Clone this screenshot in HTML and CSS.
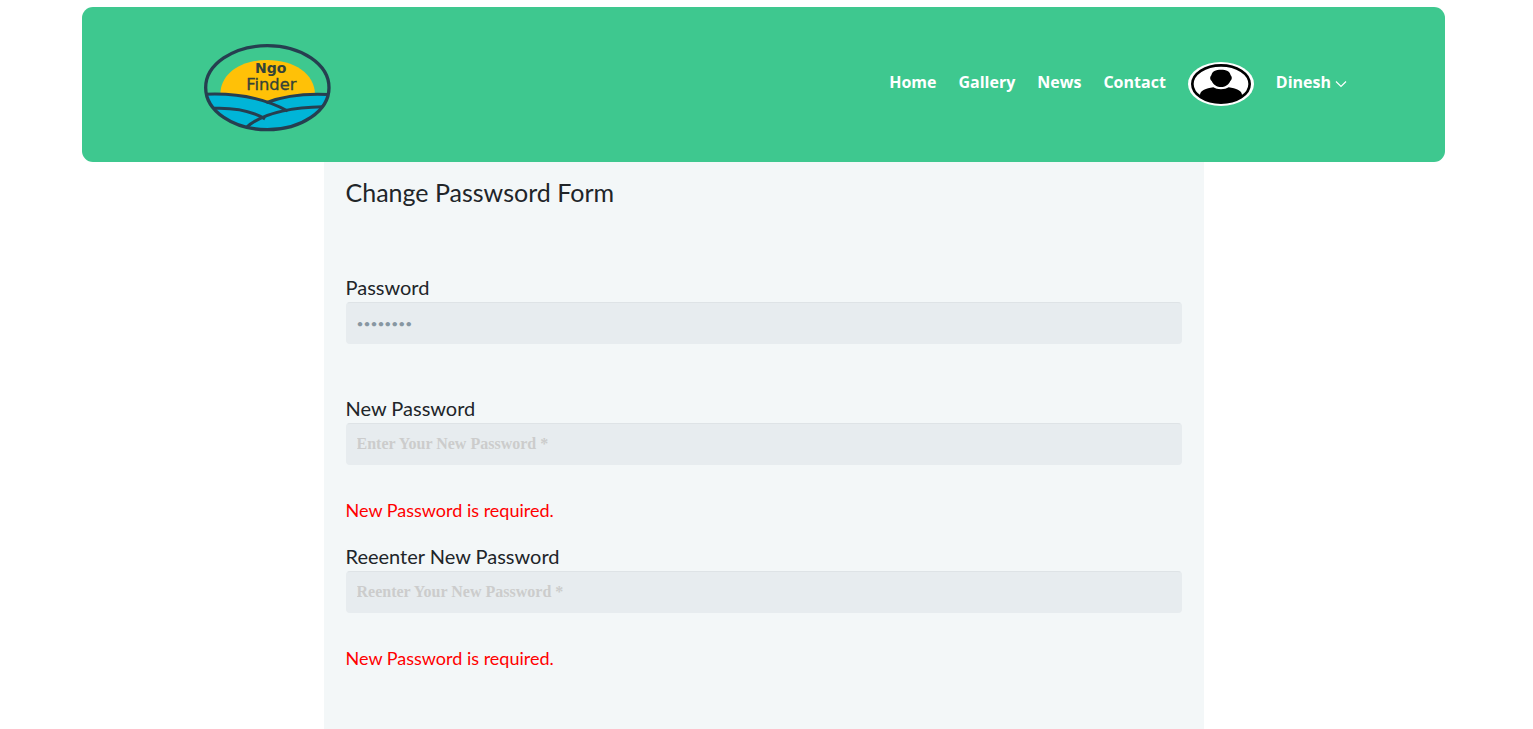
FILE: index.html
```html
<!DOCTYPE html>
<html lang="en">
<head>
<meta charset="utf-8">
<meta name="viewport" content="width=device-width, initial-scale=1">
<title>Ngo Finder - Change Password</title>
<link rel="stylesheet" href="styles.css">
</head>
<body>
<div class="page">
  <header class="header">
    <a class="brand" href="#" aria-label="Ngo Finder">
      <svg class="logo" viewBox="40 38 384 270">
        <clipPath id="oval"><ellipse cx="233" cy="172" rx="185" ry="126"/></clipPath>
        <g clip-path="url(#oval)">
          <path d="M92 193C92 130 153 89 233 89S376 130 376 193L376 220H92Z" fill="#ffc107"/>
          <path d="M40 192Q155 188 230 216Q310 186 424 193V308H40Z" fill="#00b5d8"/>
          <g fill="none" stroke="#263f50" stroke-width="9">
            <path d="M40 192Q190 184 294 242"/>
            <path d="M230 217Q310 186 424 193"/>
            <path d="M66 234Q165 229 226 266"/>
            <path d="M168 293Q235 232 400 229"/>
          </g>
        </g>
        <ellipse cx="233" cy="172" rx="185" ry="126" fill="none" stroke="#263f50" stroke-width="10"/>
        <g class="logo-text"><text x="243" y="128">Ngo</text><text x="245" y="180" class="logo-thin">Finder</text></g>
      </svg>
    </a>
    <nav class="nav">
      <a href="#">Home</a>
      <a href="#">Gallery</a>
      <a href="#">News</a>
      <a href="#">Contact</a>
      <svg class="avatar" viewBox="0 0 198 132" role="img" aria-label="Profile picture">
        <clipPath id="face"><ellipse cx="99" cy="66" rx="86" ry="56"/></clipPath>
        <ellipse cx="99" cy="66" rx="99" ry="66" fill="#fff"/>
        <ellipse cx="99" cy="66" rx="86" ry="56" fill="#fff" stroke="#000" stroke-width="8"/>
        <g clip-path="url(#face)">
          <path d="M70 40C72 28 83 23 99 23S126 28 128 40C134 47 131 54 127 57C121 70 111 75 99 75S77 70 71 57C67 54 64 47 70 40Z"/>
          <path d="M36 132V98C38 85 53 80 76 76C87 84 111 84 122 76C145 80 160 85 162 98V132Z"/>
        </g>
      </svg>
      <button class="account" type="button">Dinesh
        <svg class="chevron" viewBox="0 0 12 8"><path d="M1 1.5L6 6.5L11 1.5"/></svg>
      </button>
    </nav>
  </header>
  <main class="panel">
    <h1>Change Passwsord Form</h1>
    <form>
      <div class="field">
        <label for="current">Password</label>
        <input id="current" class="filled" type="password" value="password">
        <p class="error"></p>
      </div>
      <div class="field">
        <label for="new">New Password</label>
        <input id="new" type="password" placeholder="Enter Your New Password *">
        <p class="error invalid">New Password is required.</p>
      </div>
      <div class="field">
        <label for="again">Reeenter New Password</label>
        <input id="again" type="password" placeholder="Reenter Your New Password *">
        <p class="error invalid">New Password is required.</p>
      </div>
    </form>
  </main>
</div>
</body>
</html>
```
FILE: styles.css
```css
* { box-sizing: border-box; }
body {
  margin: 0;
  background: #fff;
  color: #212529;
  font-family: Lato, sans-serif;
}
.page {
  display: flex;
  flex-direction: column;
  align-items: center;
  min-height: 100vh;
  padding: 7px 88px 0 82px;
}
.header {
  display: flex;
  justify-content: space-between;
  align-items: flex-start;
  width: 100%;
  padding: 36px 98px 29px 121px;
  border-radius: 11px;
  background: #3ec88f;
}
.brand { display: flex; }
.logo { width: 128px; height: 90px; }
.logo-text {
  fill: #344338;
  font-family: "DejaVu Sans", sans-serif;
  font-size: 42px;
  font-weight: 700;
  text-anchor: middle;
}
.logo-thin {
  font-size: 49px;
  font-weight: 400;
  stroke: #344338;
  stroke-width: 1;
}
.nav {
  display: flex;
  align-items: center;
  gap: 22px;
  padding-top: 19px;
  font: 700 16px/24px "Open Sans", sans-serif;
}
.nav a { color: #fff; text-decoration: none; margin-bottom: 4px; }
.avatar { width: 66px; height: 44px; }
.account {
  display: flex;
  align-items: center;
  gap: 4px;
  margin-bottom: 4px;
  padding: 0;
  border: 0;
  background: none;
  color: #fff;
  font: inherit;
}
.chevron {
  width: 12px;
  height: 8px;
  margin-top: 4px;
  fill: none;
  stroke: #fff;
  stroke-width: 1.2;
}
.panel {
  flex: 1;
  width: 100%;
  max-width: 880px;
  padding: 14px 22px 60px;
  background: #f3f7f8;
}
h1 { margin: 0 0 64px; font-size: 25px; font-weight: 400; line-height: 32px; }
label { display: block; font-size: 20px; line-height: 30px; }
input {
  display: block;
  width: 100%;
  height: 42px;
  padding: 0 10px;
  border: 1px solid #e7ecef;
  border-top-color: #dee3e6;
  border-radius: 4px;
  background: #e7ecef;
  color: #8797a2;
  font: 700 16px/24px "Liberation Serif", serif;
}
.filled { font: 400 12px/24px Lato, sans-serif; }
input::placeholder { color: #ccc; opacity: 1; }
.error { margin: 0; min-height: 49px; color: #f00; font-size: 18px; line-height: 28px; }
.invalid { padding: 31px 0 17px; }
```
